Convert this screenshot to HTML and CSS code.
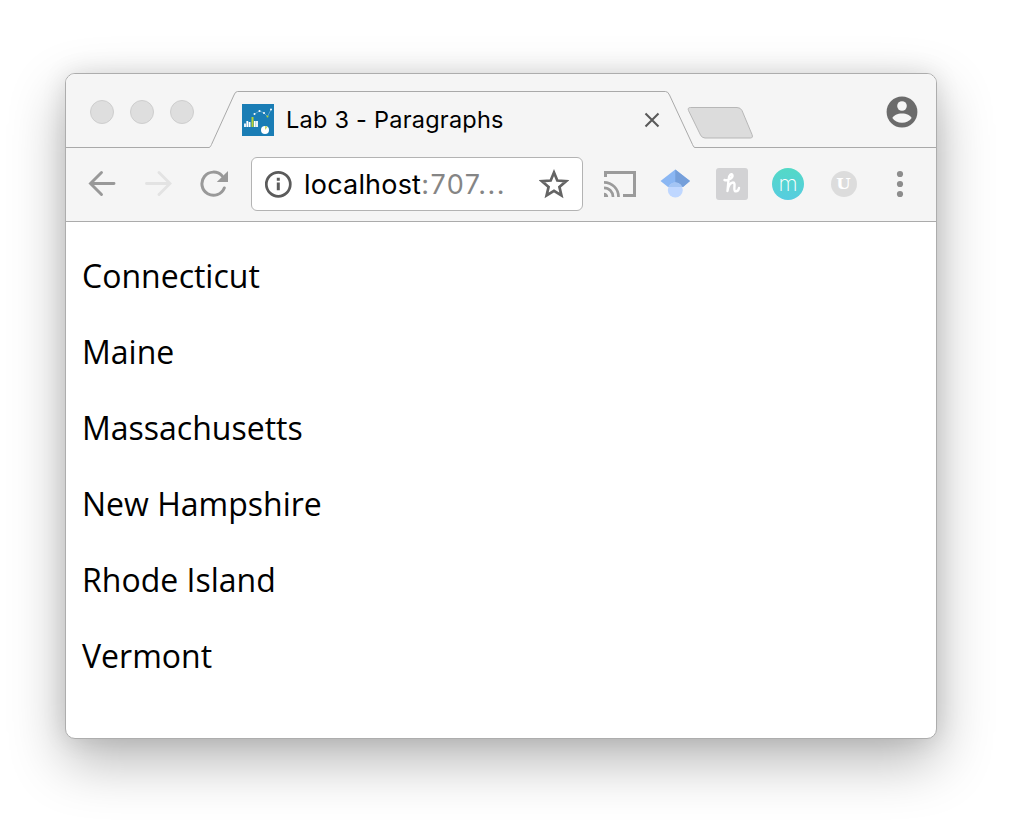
FILE: index.html
```html
<!DOCTYPE html>
<html lang="en">
<head>
<meta charset="utf-8">
<title>Lab 3 - Paragraphs</title>
<link rel="stylesheet" href="styles.css">
</head>
<body>
<div class="window">
  <header class="tabstrip">
    <div class="lights"><span class="light"></span><span class="light"></span><span class="light"></span></div>
    <div class="tab">
      <svg class="tab-shape" width="484" height="57" viewBox="0 0 484 57">
        <path d="M-1 56.5 C.5 56 .8 55 1.5 53.5 L24 4 Q25.3 .5 27.5 .5 H455.5 Q458 .5 459.5 4 L482.500 53.5 Q483.5 56.5 485 56.5 V57 H-1Z" fill="#f5f5f5"/>
        <path d="M-1 56.5 C.5 56 .8 55 1.5 53.5 L24 4 Q25.3 .5 27.5 .5 H455.5 Q458 .5 459.5 4 L482.500 53.5 Q483.5 56.5 485 56.5" fill="none" stroke="#a9a9a9"/>
      </svg>
      <svg class="favicon" width="32" height="32" viewBox="0 0 32 32">
        <path fill="#1a7db5" d="M0 0h32v32H0z"/>
        <path stroke="#fff" stroke-width="1.8" d="M3 23v-3.500M5.300 23v-6M7.600 23v-5M12.800 23v-6M15 23v-6"/>
        <path stroke="#b5d333" stroke-width="2" d="M10.500 23V13"/>
        <path d="M12.500 10 17.500 7 22 9 25.500 12.500 29 5.500" fill="none" stroke="#79b5d6" stroke-width=".7"/>
        <g fill="#fff"><circle cx="12.500" cy="10" r="1"/><circle cx="17.500" cy="7" r="1"/><circle cx="22" cy="9" r="1"/><circle cx="29" cy="5.500" r="1"/><circle cx="23" cy="26" r="4"/></g>
        <circle cx="25.500" cy="12.500" r="1" fill="#b5d333"/>
        <path d="M23 26v-4a4 4 0 0 1 2.500 1z" fill="#c7da68"/>
      </svg>
      <span class="tab-title">Lab 3 - Paragraphs</span>
      <svg class="close" width="16" height="16" viewBox="0 0 16 16"><path d="M1.500 1.500 14.500 14.500M14.500 1.500 1.500 14.500" stroke="#5a5a5a" stroke-width="2.100"/></svg>
    </div>
    <svg class="new-tab" width="68" height="34" viewBox="0 0 68 34"><path d="M4.500 1.500H51Q54.500 1.500 56 4.500L66 28.500Q67.300 32 64.500 32H19Q16 32 14.500 29L2.500 4.500Q1.300 1.500 4.500 1.500Z" fill="#dcdcdc" stroke="#b7b7b7"/></svg>
    <svg class="profile" width="32" height="32" viewBox="0 0 32 32"><circle cx="16" cy="16" r="15.400" fill="#6b6b6b"/><circle cx="16" cy="10" r="4.800" fill="#f5f5f5"/><path d="M6.400 22C7.500 19.300 11.500 17.500 16 17.500s8.500 1.800 9.600 4.500C23.700 25 20 26.800 16 26.800S8.300 25 6.400 22Z" fill="#f5f5f5"/></svg>
  </header>
  <div class="toolbar">
    <svg class="back" width="28" height="28" viewBox="0 0 28 28"><path d="M26 13.500H3M13.500 2.500 2.500 13.500l11 11" fill="none" stroke="#999" stroke-width="2.900" stroke-linecap="round"/></svg>
    <svg class="forward" width="28" height="28" viewBox="0 0 28 28"><path d="M2.500 13.500h23M15 2.500 26 13.500 15 24.500" fill="none" stroke="#e3e3e3" stroke-width="2.900" stroke-linecap="round"/></svg>
    <svg class="reload" width="28" height="28" viewBox="0 0 28 28"><path d="M24.300 18A11.600 11.600 0 1 1 22 5.800" fill="none" stroke="#999" stroke-width="3" stroke-linecap="round"/><path d="M28 1v11H16.800Z" fill="#999"/></svg>
    <div class="omnibox">
      <svg width="28" height="28" viewBox="0 0 28 28"><circle cx="14.300" cy="14.300" r="12" fill="none" stroke="#5b5b5b" stroke-width="2.700"/><path d="M14.300 12.600v7.700M14.300 7.800v3" stroke="#5b5b5b" stroke-width="3"/></svg>
      <span class="url">localhost<span class="port">:707...</span></span>
      <svg class="star" width="30" height="30" viewBox="0 0 30 30"><path d="M15 3.500 18.300 11.500 27 12.200 20.400 17.900 22.400 26.300 15 21.800 7.600 26.300 9.600 17.900 3 12.200 11.700 11.500Z" fill="none" stroke="#646464" stroke-width="2.700"/></svg>
    </div>
    <div class="extensions">
      <svg width="32" height="32" viewBox="0 0 32 32"><path d="M1.500 9V4.500h29v23H19" fill="none" stroke="#9b9b9b" stroke-width="3"/><path d="M0 14.300A14.500 14.500 0 0 1 14.500 29M0 19.800A9 9 0 0 1 9 29" fill="none" stroke="#9b9b9b" stroke-width="2.700"/><path d="M0 24.700A4.200 4.200 0 0 1 4.200 29H0Z" fill="#9b9b9b"/></svg>
      <svg width="32" height="32" viewBox="0 0 32 32"><path d="M15.300 1.500 .5 13 8 19h15L30 13Z" fill="#8bb7f3"/><path d="M15.300 1.500 30 13 23 19l-7.700-4Z" fill="#759fda"/><circle cx="15.300" cy="22" r="7.500" fill="#bfd7ff"/><path d="M8.400 19a7.500 7.500 0 0 1 13.800 0Z" fill="#a4c5f4"/></svg>
      <svg width="32" height="32" viewBox="0 0 32 32"><rect width="32" height="32" rx="3" fill="#d2d2d4"/><path d="M8.500 12C12 13 17 10 16.500 7.300 16 5 12.500 6.500 12.500 12L11.500 23C12 18 14.500 14.500 17 14.500 20.500 14.500 16.500 23 19.500 23.300 21.500 23.500 22.700 21.500 23 20" fill="none" stroke="#fff" stroke-width="2.400" stroke-linecap="round" stroke-linejoin="round"/></svg>
      <span class="badge-m">m</span>
      <span class="badge-u"><span class="badge-letter">U</span></span>
      <svg width="32" height="32" viewBox="0 0 32 32" fill="#8d8d8d"><circle cx="16" cy="6" r="3.100"/><circle cx="16" cy="16" r="3.100"/><circle cx="16" cy="26" r="3.100"/></svg>
    </div>
  </div>
  <main class="page">
    <p>Connecticut</p>
    <p>Maine</p>
    <p>Massachusetts</p>
    <p>New Hampshire</p>
    <p>Rhode Island</p>
    <p>Vermont</p>
  </main>
</div>
</body>
</html>
```
FILE: styles.css
```css
* { box-sizing: border-box; }
body { margin: 0; padding: 73px 0 0 65px; height: 826px; background: #fff; overflow: hidden; }
svg { display: block; flex: none; }
.window { width: 872px; height: 666px; border: 1px solid #adadad; border-radius: 10px; background: #fff; overflow: hidden; box-shadow: 0 22px 56px rgba(0,0,0,.29), 0 0 24px rgba(0,0,0,.1); }
.tabstrip { height: 74px; background: #f5f5f5; border-bottom: 1px solid #a9a9a9; display: flex; align-items: flex-start; }
.lights { display: flex; gap: 16px; padding: 26px 0 0 24px; width: 144px; flex: none; }
.light { width: 24px; height: 24px; border-radius: 50%; background: #dedede; border: 1px solid #cecece; }
.tab { position: relative; width: 484px; height: 57px; margin-top: 17px; display: flex; align-items: center; padding: 0 34px 0 32px; flex: none; }
.tab-shape { position: absolute; inset: 0; overflow: visible; }
.favicon, .tab-title, .close { position: relative; }
.tab-title { margin-left: 12px; font: 400 23.5px/28px Inter, sans-serif; letter-spacing: .24px; color: #000; white-space: nowrap; }
.close { margin-left: auto; }
.new-tab { margin: 32px 0 0 -8px; }
.profile { margin: 22px 18px 0 auto; }
.toolbar { height: 74px; background: #f5f5f5; border-bottom: 1px solid #ababab; display: flex; align-items: center; padding: 0 21px 1px 22px; }
.forward { margin-left: 28px; }
.reload { margin-left: 28px; }
.omnibox { width: 332px; height: 54px; margin-left: 23px; border: 1px solid #b3b3b3; border-radius: 6px; background: #fff; display: flex; align-items: center; padding: 0 13px 0 12px; flex: none; }
.url { margin: 2px 0 0 12px; font: 400 27px/34px Inter, sans-serif; letter-spacing: .2px; color: #000; white-space: nowrap; }
.port { color: #858585; letter-spacing: 1.5px; }
.star { margin-left: auto; }
.extensions { display: flex; align-items: center; gap: 24px; margin-left: 21px; }
.badge-m { width: 32px; height: 32px; border-radius: 50%; background: linear-gradient(#53d9c6, #56cce0); color: #fff; font: 200 22px/30px Inter, sans-serif; text-align: center; }
.badge-u { width: 26px; height: 26px; margin: 0 3px; border-radius: 50%; background: #dcdcdc; color: #fff; font: bold 15px/27px "DejaVu Serif", serif; display: flex; justify-content: center; }
.badge-letter { transform: scaleX(1.1); }
.page { padding: 16px; font: 32px/44px "Open Sans", sans-serif; color: #000; }
.page p { height: 44px; margin: 16px 0 32px; white-space: nowrap; }
```
